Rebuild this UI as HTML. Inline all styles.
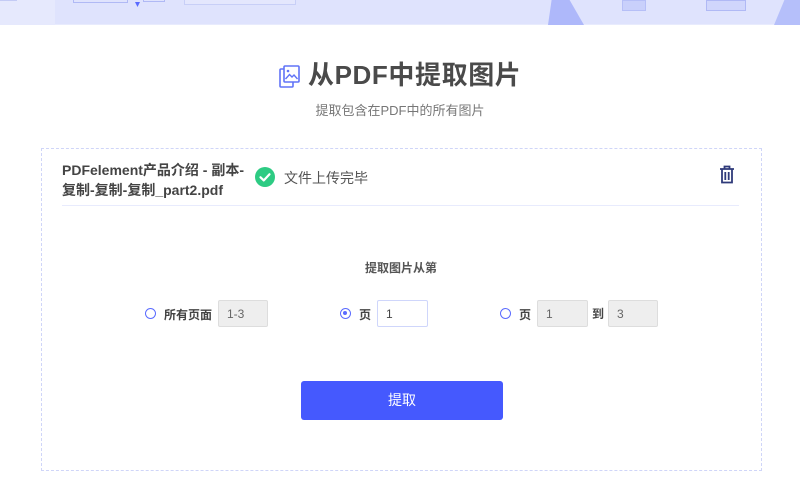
<!DOCTYPE html>
<html><head><meta charset="utf-8"><style>
*{margin:0;padding:0;box-sizing:border-box}
body{width:800px;height:500px;background:#fff;font-family:"Liberation Sans","Noto Sans CJK SC",sans-serif;position:relative;overflow:hidden;color:#333}
.ab{position:absolute}
.banner{left:0;top:0;width:800px;height:25px;background:#dfe3fd;border-bottom:1px solid #e8ebfd}
.box{left:41px;top:148px;width:721px;height:323px;border:1px dashed #cfd5f8}
.inp{position:absolute;height:27px;border:1px solid #ddd;background:#eee;font-size:12px;color:#666;padding:7px 8px;line-height:13px;border-radius:2px}
.radio{position:absolute;width:11px;height:11px;border:1.5px solid #5a6bff;border-radius:50%}
.lbl{position:absolute;font-size:12px;font-weight:bold;color:#444}
</style></head><body>
<div class="ab banner">
  <div class="ab" style="left:0;top:0;width:55px;height:25px;background:#e6e9fd"></div>
  <div class="ab" style="left:0;top:0;width:17px;height:1px;background:#c4cbf5"></div>
  <div class="ab" style="left:73px;top:0;width:55px;height:3px;border:1px solid #b0b9f5;border-top:none"></div>
  <div class="ab" style="left:135px;top:2px;width:5px;height:5px;background:#5a6bff;clip-path:polygon(0 0,100% 0,50% 100%)"></div>
  <div class="ab" style="left:143px;top:0;width:22px;height:2px;border:1px solid #b0b9f5;border-top:none"></div>
  <div class="ab" style="left:184px;top:0;width:112px;height:5px;border:1px solid #c8cff7;border-top:none;background:#e4e7fd"></div>
  <div class="ab" style="left:548px;top:0;width:36px;height:25px;background:#aeb8fa;clip-path:polygon(10% 0,60% 0,100% 100%,0 100%)"></div>
  <div class="ab" style="left:622px;top:0;width:24px;height:11px;background:#c9d0fb;border:1px solid #b6bff7"></div>
  <div class="ab" style="left:706px;top:0;width:40px;height:11px;background:#d0d6fc;border:1px solid #b0b9f5"></div>
  <div class="ab" style="left:774px;top:0;width:26px;height:25px;background:#b5bffa;clip-path:polygon(40% 0,100% 0,100% 100%,0 100%)"></div>
</div>

<svg class="ab" style="left:279px;top:65px" width="22" height="24" viewBox="0 0 22 24">
  <rect x="1" y="4" width="13" height="18" rx="1" fill="none" stroke="#6073f7" stroke-width="1.6"/>
  <rect x="5" y="1" width="15" height="16" rx="1" fill="#fff" stroke="#6073f7" stroke-width="1.6"/>
  <circle cx="9" cy="6" r="1.3" fill="#6073f7"/>
  <path d="M6.5 14 L10.5 9.5 L13 12 L15 10 L18.5 14" fill="none" stroke="#6073f7" stroke-width="1.4"/>
</svg>
<div class="ab" style="left:308px;top:58px;font-size:26px;font-weight:bold;color:#4a4a4a;line-height:34px;letter-spacing:0.6px">从PDF中提取图片</div>
<div class="ab" style="left:0;width:800px;top:100px;text-align:center;font-size:13px;color:#777">提取包含在PDF中的所有图片</div>

<div class="ab box"></div>
<div class="ab" style="left:62px;top:160px;font-size:14px;font-weight:bold;color:#444;line-height:20px">PDFelement产品介绍 - 副本-<br>复制-复制-复制_part2.pdf</div>
<svg class="ab" style="left:255px;top:167px" width="20" height="20"><circle cx="10" cy="10" r="10" fill="#2dcb83"/><path d="M5.5 10.3 L8.8 13.4 L14.5 7.3" fill="none" stroke="#fff" stroke-width="2.2" stroke-linecap="round" stroke-linejoin="round"/></svg>
<div class="ab" style="left:284px;top:168px;font-size:14px;color:#555">文件上传完毕</div>
<svg class="ab" style="left:719px;top:165px" width="16" height="19" viewBox="0 0 16 19"><path d="M1 4 H15 M5.5 4 V1.5 H10.5 V4 M3 4 V17.5 H13 V4 M6.3 7 V15 M9.7 7 V15" fill="none" stroke="#2f3a7a" stroke-width="1.8"/></svg>
<div class="ab" style="left:62px;top:205px;width:677px;height:1px;background:#e8ebfd"></div>

<div class="ab" style="left:0;width:802px;top:259px;text-align:center;font-size:12px;font-weight:bold;color:#555">提取图片从第</div>

<div class="radio" style="left:145px;top:308px"></div>
<div class="lbl" style="left:164px;top:306px">所有页面</div>
<div class="inp" style="left:218px;top:300px;width:50px">1-3</div>

<div class="radio" style="left:340px;top:308px"><div class="ab" style="left:2px;top:2px;width:4px;height:4px;border-radius:50%;background:#5a6bff"></div></div>
<div class="lbl" style="left:359px;top:306px">页</div>
<div class="inp" style="left:377px;top:300px;width:51px;background:#fff;border-color:#cfd6fb;color:#444">1</div>

<div class="radio" style="left:500px;top:308px"></div>
<div class="lbl" style="left:519px;top:306px">页</div>
<div class="inp" style="left:537px;top:300px;width:51px">1</div>
<div class="lbl" style="left:592px;top:305px">到</div>
<div class="inp" style="left:608px;top:300px;width:50px">3</div>

<div class="ab" style="left:301px;top:381px;width:202px;height:39px;background:#4559fe;border-radius:3px;color:#fff;font-size:14px;text-align:center;line-height:39px">提取</div>
</body></html>
